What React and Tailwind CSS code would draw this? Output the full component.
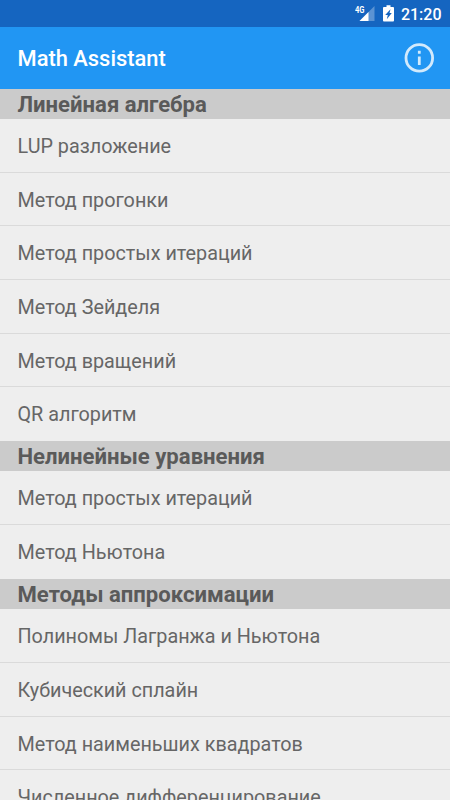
import React from "react";

const sections = [
    {
        title: "Линейная алгебра",
        items: [
            "LUP разложение",
            "Метод прогонки",
            "Метод простых итераций",
            "Метод Зейделя",
            "Метод вращений",
            "QR алгоритм",
        ],
    },
    {
        title: "Нелинейные уравнения",
        items: ["Метод простых итераций", "Метод Ньютона"],
    },
    {
        title: "Методы аппроксимации",
        items: [
            "Полиномы Лагранжа и Ньютона",
            "Кубический сплайн",
            "Метод наименьших квадратов",
            "Численное дифференцирование",
        ],
    },
];

function StatusBar() {
    return (
        <div className="flex h-[27px] shrink-0 items-center justify-end bg-[#1565c0] pr-[8.5px] text-white">
            <svg width="20" height="27" viewBox="0 0 20 27" className="mr-[8px]">
                <text x="0" y="13" fontSize="9.5" fontWeight="700" textLength="9.5" lengthAdjust="spacingAndGlyphs" fill="currentColor">
                    4G
                </text>
                <path d="M19.5 6v15h-15z" fill="currentColor" fillOpacity="0.3" />
                <path d="M13.5 12v9h-9z" fill="currentColor" />
            </svg>
            <svg width="11" height="27" viewBox="0 0 11 27" className="mr-[6.5px]">
                <path d="M3.5 5.3h4V7h2.6q.9 0 .9.9v12.7q0 .9-.9.9H.9q-.9 0-.9-.9V7.9q0-.9.9-.9h2.6z" fill="currentColor" />
                <path d="M7.5 9.3l-1 3.7h2.3l-5 6.2 1-4.2H2.2z" fill="#1565c0" />
            </svg>
            <span className="pt-[2px] text-[16px] leading-none font-medium">21:20</span>
        </div>
    );
}

function AppBar() {
    return (
        <div className="flex h-[61.5px] shrink-0 items-center justify-between bg-[#2196f3] pr-[15px] pl-[17.5px] text-white">
            <h1 className="pt-[3px] text-[21.9px] font-medium">Math Assistant</h1>
            <svg width="31" height="31" viewBox="0 0 31 31" fill="none" stroke="currentColor" strokeWidth="2.8" className="opacity-80">
                <circle cx="15.3" cy="15.9" r="13.3" />
                <path d="M15.3 14.5v8.6M15.3 8.7v3" />
            </svg>
        </div>
    );
}

function Section({ title, items }) {
    return (
        <section>
            <h2 className="h-[30.4px] bg-[#cbcbcb] pl-[17.5px] text-[22.1px] leading-[31.5px] font-bold text-[#5a5a5a]">{title}</h2>
            <ul className="divide-y divide-[#dadada]">
                {items.map((item) => (
                    <li key={item} className="h-[53.7px] pl-[17.5px] text-[19.8px] leading-[56.7px] text-[#666666]">
                        {item}
                    </li>
                ))}
            </ul>
        </section>
    );
}

export default function App() {
    return (
        <div className="flex h-screen flex-col overflow-hidden bg-[#eeeeee] font-['Roboto',sans-serif]">
            <StatusBar />
            <AppBar />
            <main className="min-h-0 flex-1 overflow-hidden">
                {sections.map((section) => (
                    <Section key={section.title} title={section.title} items={section.items} />
                ))}
            </main>
        </div>
    );
}
